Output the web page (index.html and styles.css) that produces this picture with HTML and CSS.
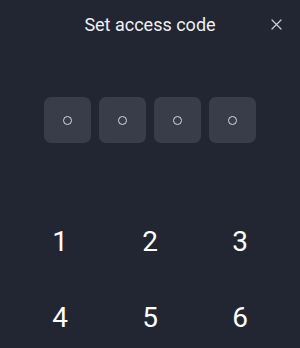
FILE: index.html
```html
<!DOCTYPE html>
<html lang="en">
<head>
    <meta charset="UTF-8">
    <meta name="viewport" content="width=device-width, initial-scale=1.0">
    <title>Set access code</title>
    <link rel="stylesheet" href="styles.css">
</head>
<body>
    <div class="screen">
        <div class="header">
            <span></span>
            <h1>Set access code</h1>
            <button class="close" aria-label="Close">
                <svg width="11" height="11" viewBox="0 0 11 11">
                    <path d="M1 1 L10 10 M10 1 L1 10" stroke="#c9ccd4" stroke-width="1.3" stroke-linecap="round"/>
                </svg>
            </button>
        </div>

        <!-- code slots -->
        <div class="code">
            <div class="slot"><span class="dot"></span></div>
            <div class="slot"><span class="dot"></span></div>
            <div class="slot"><span class="dot"></span></div>
            <div class="slot"><span class="dot"></span></div>
        </div>

        <div class="keypad">
            <button class="key">1</button>
            <button class="key">2</button>
            <button class="key">3</button>
            <button class="key">4</button>
            <button class="key">5</button>
            <button class="key">6</button>
        </div>
    </div>
</body>
</html>
```

FILE: styles.css
```css
body {
    margin: 0;
    padding: 0;
    background-color: #222632;
    font-family: Roboto, "Noto Sans", sans-serif;
    color: #ffffff;
    overflow: hidden;
}

.screen {
    width: 300px;
    height: 348px;
}

.header {
    display: grid;
    grid-template-columns: 1fr auto 1fr;
    align-items: center;
    padding: 12px 14px 0 14px;
    height: 24px;
}

.header h1 {
    margin: 0;
    font-size: 18px;
    font-weight: 400;
    color: #eef0f4;
}

.close {
    justify-self: end;
    background: none;
    border: none;
    padding: 0 4px 0 0;
    display: flex;
    cursor: pointer;
}

.code {
    display: flex;
    justify-content: center;
    gap: 8px;
    margin-top: 61px;
}

.slot {
    width: 47px;
    height: 46px;
    border-radius: 7px;
    background: #393d49;
    display: flex;
    justify-content: center;
    align-items: center;
}

.dot {
    width: 7px;
    height: 7px;
    border: 1.4px solid #d8dae0;
    border-radius: 50%;
}

.keypad {
    display: grid;
    grid-template-columns: repeat(3, 90px);
    grid-auto-rows: 76px;
    padding: 60px 15px 0 15px;
}

.key {
    background: none;
    border: none;
    color: #ffffff;
    font-family: Roboto, "Noto Sans", sans-serif;
    font-size: 28px;
    font-weight: 400;
    display: flex;
    justify-content: center;
    align-items: center;
    cursor: pointer;
}
```
